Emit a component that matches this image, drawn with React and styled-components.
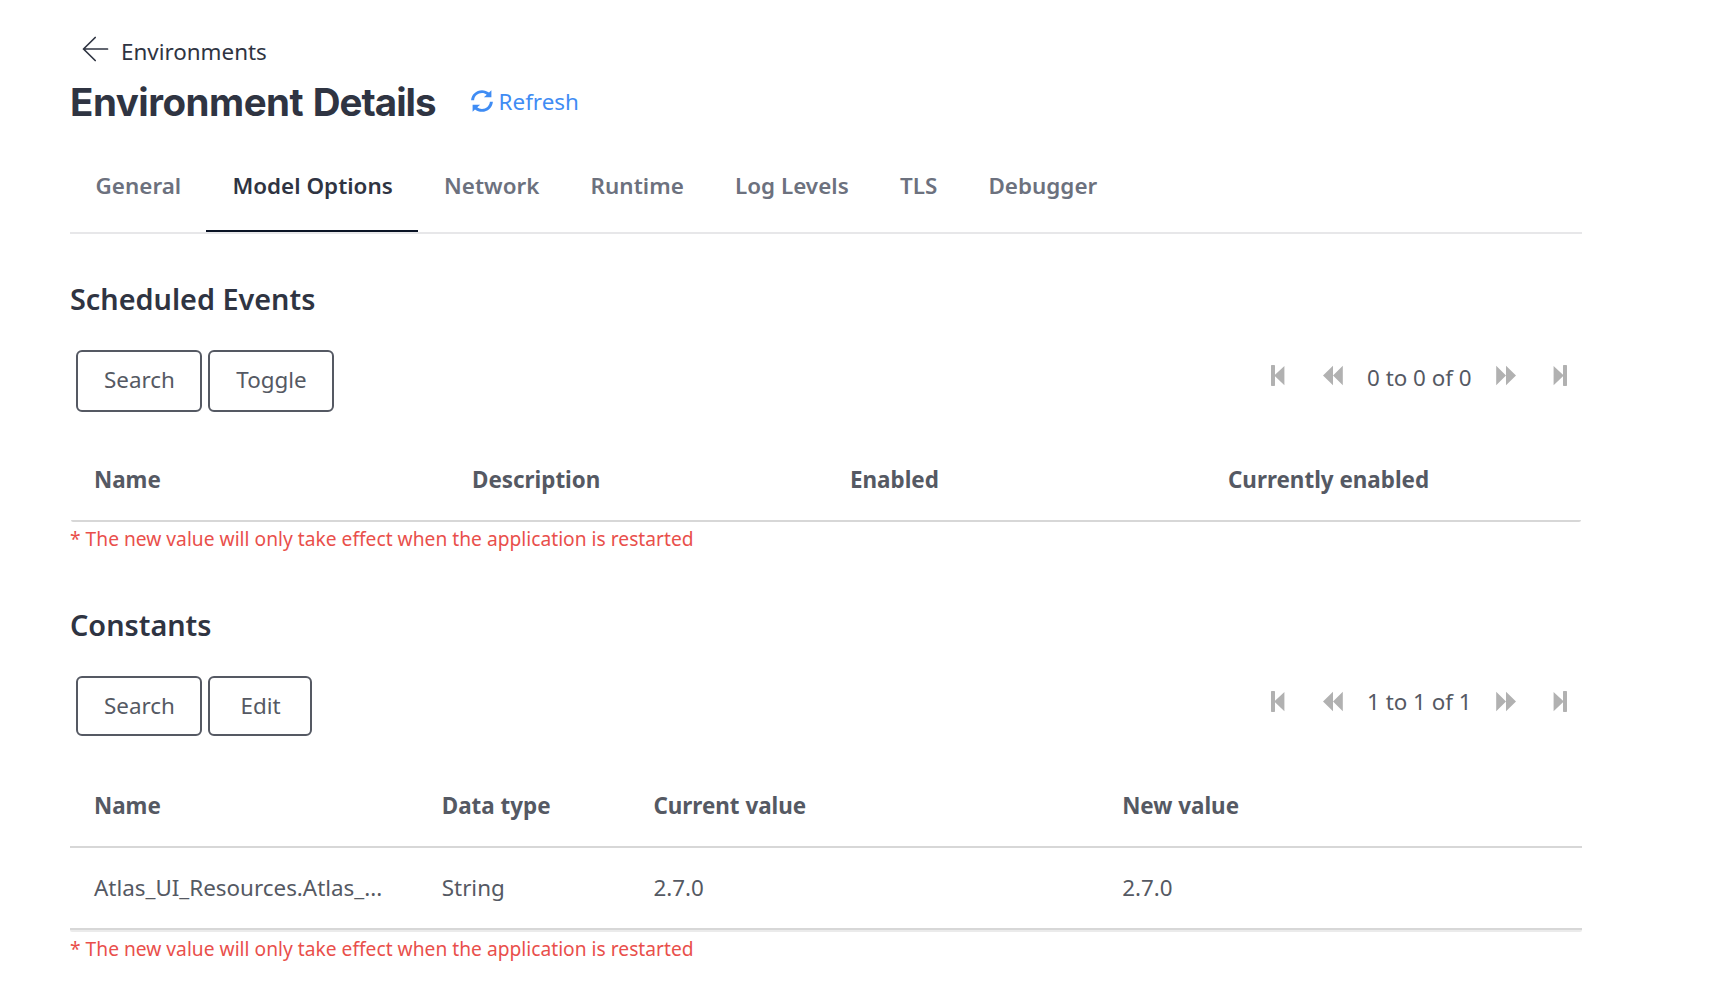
import React from "react";
import styled, { createGlobalStyle } from "styled-components";

const GlobalStyle = createGlobalStyle`
  body {
    margin: 0;
    background: #fff;
    color: #555963;
    font: 22.4px/32px "Noto Sans", sans-serif;
  }
`;

const Page = styled.main`
  width: 1512px;
  height: 992px;
  padding-left: 70px;
  box-sizing: content-box;
  overflow: hidden;
`;

const BackLink = styled.a`
  display: flex;
  align-items: center;
  height: 32px;
  padding: 36px 0 0 12px;
  color: #2f3442;
`;

const BackIcon = styled.svg`
  width: 27px;
  height: 26px;
  margin: 0 12px 6px 0;
`;

const TitleRow = styled.header`
  display: flex;
  align-items: center;
  height: 48px;
  margin-top: 10px;
`;

const Title = styled.h1`
  width: 400px;
  margin: 0;
  color: #2f3442;
  font: 700 38.5px/48px Inter, sans-serif;
  letter-spacing: -0.5px;
  white-space: nowrap;
`;

const TitleEnd = styled.span`
  margin-left: 1px;
  letter-spacing: -1px;
`;

const RefreshLink = styled.a`
  display: flex;
  align-items: center;
  padding-left: 0.6px;
  color: #3f8cf4;
`;

const RefreshIcon = styled.svg`
  width: 22px;
  height: 22px;
  margin: 0 6px 2px 0;
`;

const Tabs = styled.nav`
  display: flex;
  height: 62px;
  margin-top: 44px;
  border-bottom: 2px solid #e7e7e9;
`;

const Tab = styled.a`
  height: 60px;
  margin-left: ${(p) => (p.$active ? "-0.6px" : 0)};
  padding: 0 25.6px 0 ${(p) => (p.$active ? "26.2px" : "25.6px")};
  border-bottom: 2px solid ${(p) => (p.$active ? "#0a1325" : "transparent")};
  color: ${(p) => (p.$active ? "#2f3442" : "#6c717e")};
  font-weight: 600;
  letter-spacing: 0.025px;
  white-space: nowrap;
`;

const Section = styled.section`
  padding-top: ${(p) => p.$top}px;
`;

const SectionTitle = styled.h2`
  margin: 0;
  color: #2f3442;
  font-size: 28.8px;
  font-weight: 600;
  line-height: 40px;
`;

const Toolbar = styled.div`
  display: flex;
  justify-content: space-between;
  height: 62px;
  padding: 0 15px 0 6px;
  margin-top: 31px;
`;

const Actions = styled.div`
  display: flex;
  gap: 6px;
  align-items: flex-start;
`;

const Button = styled.button`
  display: flex;
  justify-content: center;
  box-sizing: border-box;
  width: ${(p) => p.$width}px;
  height: ${(p) => p.$height}px;
  padding: 12px 0 0 1px;
  border: 2px solid #555963;
  border-radius: 6px;
  background: #fff;
  color: #555963;
  font: inherit;
`;

const Pager = styled.div`
  display: flex;
  align-items: flex-start;
  height: 32px;
  padding-top: 11px;
`;

const PagerIcon = styled.svg`
  width: ${(p) => p.$width}px;
  height: 21px;
  margin: 4px ${(p) => p.$right}px 0 0;
  fill: #b1b1b1;
`;

const PagerText = styled.span`
  width: 128.5px;
  margin-top: ${(p) => p.$shift}px;
`;

const Grid = styled.div`
  margin-top: 28px;
`;

const Row = styled.div`
  display: grid;
  grid-template-columns: ${(p) => p.$columns};
  align-items: center;
  height: 80px;
  border-bottom: ${(p) => (p.$open ? "none" : "2px solid #d7d7d7")};
  font-weight: ${(p) => (p.$head ? 700 : 400)};
`;

const Cell = styled.div`
  padding-left: 24px;
  white-space: nowrap;
`;

const GridEdge = styled.div`
  height: 2px;
  margin: 0 ${(p) => (p.$dark ? "1px" : 0)};
  border-radius: 0 0 4px 4px;
  background: ${(p) => (p.$dark ? "#d7d7d7" : "#ebebeb")};
`;

const Notice = styled.p`
  margin: 3px 0 0;
  color: #e94f4b;
  font-size: 19.2px;
  line-height: 28px;
  letter-spacing: 0.01px;
`;

const First = ({ right }) => (
  <PagerIcon $width={14} $right={right} viewBox="0 0 14 21">
    <path d="M0 .7Q0 0 .7 0H3.3Q4 0 4 .7V9.8L13.4 1V20.2L4 11.2V20.3Q4 21 3.3 21H.7Q0 21 0 20.3Z" />
  </PagerIcon>
);

const Previous = ({ right }) => (
  <PagerIcon $width={20} $right={right} viewBox="0 0 20 21">
    <path d="M0 10.5 10 .8V10.5L19.8 .8V20.2L10 10.5V20.2Z" />
  </PagerIcon>
);

const Next = ({ right }) => (
  <PagerIcon $width={20} $right={right} viewBox="0 0 20 21">
    <path d="M20 10.5 10 .8V10.5L.2 .8V20.2L10 10.5V20.2Z" />
  </PagerIcon>
);

const Last = () => (
  <PagerIcon $width={14} $right={0} viewBox="0 0 14 21">
    <path d="M14 .7Q14 0 13.3 0H10.7Q10 0 10 .7V9.8L.6 1V20.2L10 11.2V20.3Q10 21 10.7 21H13.3Q14 21 14 20.3Z" />
  </PagerIcon>
);

const Paging = ({ text, shift }) => (
  <Pager>
    <First right={38} />
    <Previous right={24} />
    <PagerText $shift={shift}>{text}</PagerText>
    <Next right={37.5} />
    <Last />
  </Pager>
);

const tabs = ["General", "Model Options", "Network", "Runtime", "Log Levels", "TLS", "Debugger"];
const eventColumns = "repeat(4, 25%)";
const constantColumns = "23% 14% 31% 32%";
const notice = "* The new value will only take effect when the application is restarted";

const Cells = ({ values }) => values.map((value, i) => <Cell key={i}>{value}</Cell>);

export default function App() {
  return (
    <>
      <GlobalStyle />
      <Page>
        <BackLink>
          <BackIcon viewBox="0 0 27 26" fill="none" stroke="currentColor" strokeWidth="1.7" strokeLinecap="round" strokeLinejoin="round">
            <path d="M13.2 1.5 1.5 13 13.2 24.5M1.5 13H25.5" />
          </BackIcon>
          Environments
        </BackLink>
        <TitleRow>
          <Title>
            Environment <TitleEnd>Details</TitleEnd>
          </Title>
          <RefreshLink>
            <RefreshIcon viewBox="0 0 22 22" fill="currentColor">
              <path d="M.1 10.3C.5 4.500 5.200 .2 11 .2c2.700 0 5.100 .9 7 2.400L20.400 .3V7.300H12.900L15.700 4.700C14.400 3.700 12.800 3.100 11 3.100 6.800 3.100 3.400 6.200 3.100 10.300Z" />
              <path d="M21.900 11.700C21.500 17.500 16.800 21.800 11 21.800c-2.700 0-5.100-.9-7-2.400L1.600 21.700V14.700H9.100L6.300 17.300C7.600 18.300 9.200 18.900 11 18.900 15.200 18.900 18.600 15.800 18.900 11.700Z" />
            </RefreshIcon>
            Refresh
          </RefreshLink>
        </TitleRow>
        <Tabs>
          {tabs.map((name) => (
            <Tab key={name} $active={name === "Model Options"}>{name}</Tab>
          ))}
        </Tabs>
        <Section $top={45}>
          <SectionTitle>Scheduled Events</SectionTitle>
          <Toolbar>
            <Actions>
              <Button $width={126} $height={62}>Search</Button>
              <Button $width={126} $height={62}>Toggle</Button>
            </Actions>
            <Paging text="0 to 0 of 0" shift={1} />
          </Toolbar>
          <Grid>
            <Row $head $open $columns={eventColumns}>
              <Cells values={["Name", "Description", "Enabled", "Currently enabled"]} />
            </Row>
            <GridEdge $dark />
          </Grid>
          <Notice>{notice}</Notice>
        </Section>
        <Section $top={52}>
          <SectionTitle>Constants</SectionTitle>
          <Toolbar>
            <Actions>
              <Button $width={126} $height={60}>Search</Button>
              <Button $width={104} $height={60}>Edit</Button>
            </Actions>
            <Paging text="1 to 1 of 1" shift={-1} />
          </Toolbar>
          <Grid>
            <Row $head $columns={constantColumns}>
              <Cells values={["Name", "Data type", "Current value", "New value"]} />
            </Row>
            <Row $columns={constantColumns}>
              <Cells values={["Atlas_UI_Resources.Atlas_...", "String", "2.7.0", "2.7.0"]} />
            </Row>
            <GridEdge />
          </Grid>
          <Notice>{notice}</Notice>
        </Section>
      </Page>
    </>
  );
}
